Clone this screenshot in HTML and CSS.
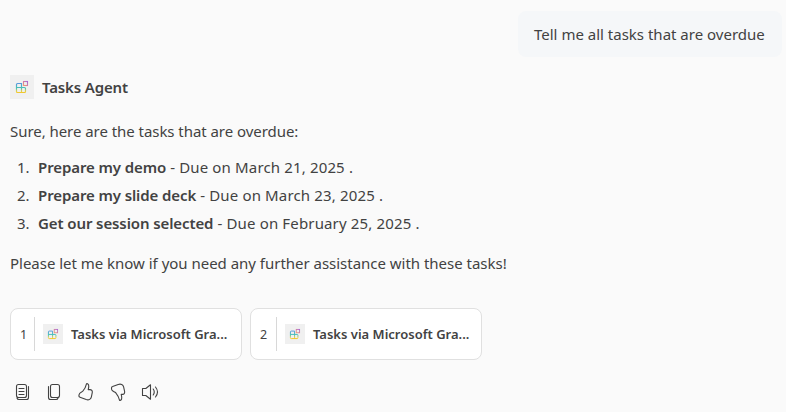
FILE: index.html
```html
<!DOCTYPE html>
<html lang="en">
<head>
<meta charset="utf-8">
<title>Tasks Agent</title>
<link rel="stylesheet" href="styles.css">
</head>
<body>
<svg class="defs" width="0" height="0" aria-hidden="true">
  <defs>
    <linearGradient id="blocks" x1="0" y1="0" x2="0" y2="1">
      <stop offset="0" stop-color="#5798dc"/>
      <stop offset=".5" stop-color="#46c4b4"/>
      <stop offset=".8" stop-color="#e5d04a"/>
      <stop offset="1" stop-color="#f5c523"/>
    </linearGradient>
    <linearGradient id="tile" x1="1" y1="0" x2="0" y2="1">
      <stop offset="0" stop-color="#a966d6"/>
      <stop offset="1" stop-color="#f39a72"/>
    </linearGradient>
    <symbol id="agent" viewBox="0 0 24 24">
      <path d="M11.500 18V8.500H7.500a1 1 0 0 0-1 1V16.500a1 1 0 0 0 1 1H14.500a1 1 0 0 0 1-1V13.500a1 1 0 0 0-1-1H6.500" fill="none" stroke="url(#blocks)" stroke-width="1.200"/>
      <rect x="13.500" y="6.500" width="4" height="4" fill="none" stroke="url(#tile)" stroke-width="1.100"/>
    </symbol>
  </defs>
</svg>
<main class="chat">
  <div class="prompt"><span>Tell me all tasks that are overdue</span></div>
  <header class="agent">
    <svg class="avatar"><use href="#agent"/></svg>
    <strong>Tasks Agent</strong>
  </header>
  <section class="answer">
    <p class="intro">Sure, here are the tasks that are overdue:</p>
    <ol>
      <li><strong>Prepare my demo</strong><span> - Due on March 21, 2025 .</span></li>
      <li><strong>Prepare my slide deck</strong><span> - Due on March 23, 2025 .</span></li>
      <li><strong>Get our session selected</strong><span> - Due on February 25, 2025 .</span></li>
    </ol>
    <p class="outro">Please let me know if you need any further assistance with these tasks!</p>
  </section>
  <div class="sources">
    <div class="card"><span class="num">1</span><svg class="mini"><use href="#agent"/></svg><strong>Tasks via Microsoft Gra...</strong></div>
    <div class="card"><span class="num second">2</span><svg class="mini"><use href="#agent"/></svg><strong>Tasks via Microsoft Gra...</strong></div>
  </div>
  <div class="actions">
    <svg viewBox="0 0 20 20"><rect x="4.500" y="2.500" width="10" height="13" rx="2"/><path d="M16.500 4.500V15.500a2 2 0 0 1-2 2H7a2 2 0 0 1-2-1.500M7 6.500h5M7 9.500h5M7 12.500h5"/></svg>
    <svg viewBox="0 0 20 20"><rect x="6.500" y="2.500" width="9" height="13" rx="2"/><path d="M4.500 4.500V15.500a2 2 0 0 0 2 2H12a2 2 0 0 0 2-1.500"/></svg>
    <svg viewBox="0 0 20 20"><path d="M10.500 1.800C9.900 4.500 8.500 7.200 6.800 9.200C5.700 10.400 3.500 10.600 3.200 12.300L2.900 13.700C2.800 14.500 3.200 15 4 15.300L10.200 17.600C13 18.500 14.900 17.100 15.400 14.800L16.300 10.300C16.500 8.700 15.500 7.600 14 7.600H12.200C12.700 5.900 13 4.200 12.600 3C12.200 1.800 10.900 1.200 10.500 1.800Z"/></svg>
    <svg viewBox="0 0 20 20"><path d="M11.500 18.200C10.900 15.500 9.500 12.800 7.800 10.800C6.300 9.600 4 9.200 3.700 7.700L3.500 6.300C3.400 5.400 3.700 4.900 4.600 4.600L10.200 2.400C13 1.500 15 2.600 15.600 4.900L16.600 9.400C16.900 11.200 16 12.400 14.600 12.400H13.200C13.700 14.100 14 15.800 13.600 17C13.200 18.200 11.900 18.800 11.500 18.200Z"/></svg>
    <svg viewBox="0 0 20 20"><path d="M2.500 6.500H5.800L10.500 2.800V17.200L5.800 13.500H2.500ZM13.200 7c1.200 1.700 1.200 4.300 0 6M15.500 5c2.400 3 2.400 7 0 10"/></svg>
  </div>
</main>
</body>
</html>
```

FILE: styles.css
```css
* { box-sizing: border-box; }
body {
  margin: 0;
  background: #fafafa;
  color: #424242;
  font: 15px/28px "Noto Sans", sans-serif;
  white-space: nowrap;
}
.defs { display: block; }
.chat {
  display: flex;
  flex-direction: column;
  height: 412px;
  padding: 11px 4px 0 10px;
  overflow: hidden;
}
strong { font-weight: 600; }
.prompt {
  align-self: flex-end;
  width: 264px;
  height: 46px;
  padding: 9px 16px;
  border-radius: 8px;
  background: #f5f7f9;
}
.agent {
  display: flex;
  align-items: center;
  gap: 8px;
  height: 24px;
  margin-top: 18px;
}
.agent strong { letter-spacing: -0.15px; }
.avatar { width: 24px; height: 24px; background: #f0f0f0; }
.answer { margin-top: 18px; }
p, ol { margin: 0; }
.intro { letter-spacing: -0.05px; }
.outro { letter-spacing: -0.02px; }
ol {
  margin: 8px 0 12px;
  padding-left: 7px;
  list-style: none;
  counter-reset: task;
}
li { display: flex; white-space: pre; counter-increment: task; }
li::before { content: counter(task) "."; width: 21px; }
li strong { letter-spacing: -0.1px; }
li span { letter-spacing: 0.15px; }
.sources { display: flex; gap: 8px; margin-top: 31px; }
.card {
  display: flex;
  align-items: center;
  width: 232px;
  height: 52px;
  border: 1px solid #e0e0e0;
  border-radius: 8px;
  background: #fff;
  font-size: 13px;
}
.num {
  width: 24px;
  height: 34px;
  padding-left: 9px;
  border-right: 1px solid #d8d8d8;
  font-size: 12.5px;
  line-height: 35px;
}
.second { width: 26px; }
.mini { width: 20px; height: 20px; margin: 0 8px; background: #f0f0f0; }
.actions { display: flex; gap: 12px; margin-top: 22px; padding-left: 2px; }
.actions svg {
  width: 20px;
  height: 20px;
  fill: none;
  stroke: #424242;
  stroke-width: 1.1;
  stroke-linejoin: round;
  stroke-linecap: round;
}
```
